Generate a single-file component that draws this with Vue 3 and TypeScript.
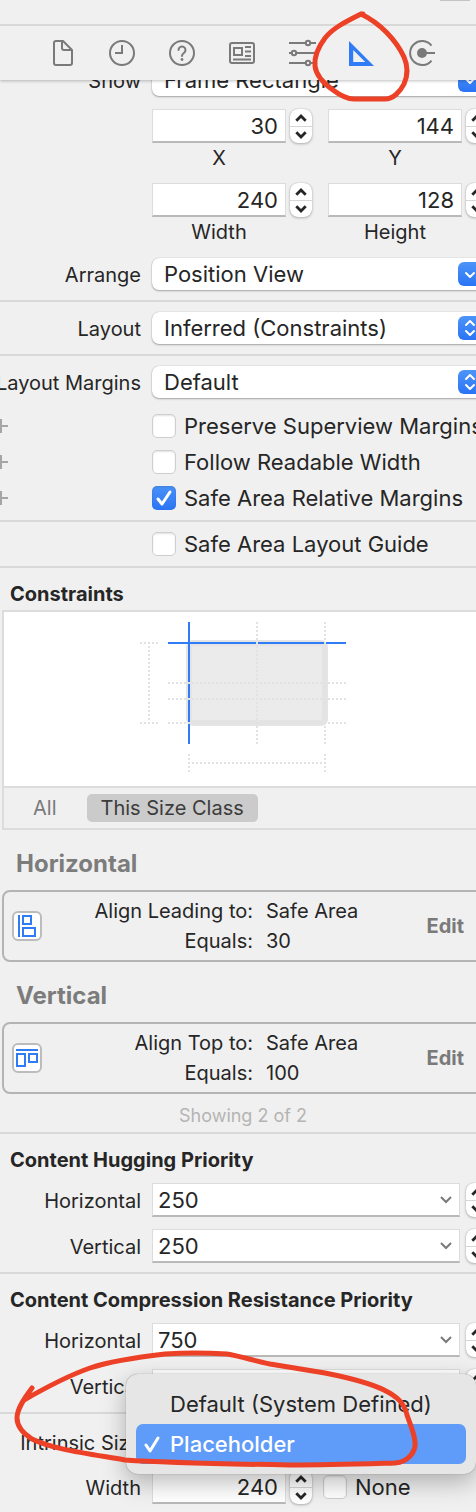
<script setup lang="ts">
import { ref } from 'vue'

interface Constraint {
  axis: string
  kind: 'leading' | 'top'
  relation: string
  target: string
  value: string
}

interface PriorityGroup {
  title: string
  rows: { id: string; label: string; value: string }[]
}

const tabs = ['file', 'history', 'help', 'identity', 'attributes', 'size', 'connections']
const activeTab = ref('size')

const frameFields = ref([
  { id: 'x', label: 'X', value: '30' },
  { id: 'y', label: 'Y', value: '144' },
  { id: 'width', label: 'Width', value: '240' },
  { id: 'height', label: 'Height', value: '128' },
])

const marginOptions = ref([
  { id: 'superview', label: 'Preserve Superview Margins', checked: false },
  { id: 'readable', label: 'Follow Readable Width', checked: false },
  { id: 'safe-relative', label: 'Safe Area Relative Margins', checked: true },
])
const safeAreaGuide = ref(false)
const noWidth = ref(false)
const intrinsicWidth = ref('240')

const constraints: Constraint[] = [
  { axis: 'Horizontal', kind: 'leading', relation: 'Align Leading to:', target: 'Safe Area', value: '30' },
  { axis: 'Vertical', kind: 'top', relation: 'Align Top to:', target: 'Safe Area', value: '100' },
]

const priorities = ref<PriorityGroup[]>([
  {
    title: 'Content Hugging Priority',
    rows: [
      { id: 'hug-h', label: 'Horizontal', value: '250' },
      { id: 'hug-v', label: 'Vertical', value: '250' },
    ],
  },
  {
    title: 'Content Compression Resistance Priority',
    rows: [
      { id: 'res-h', label: 'Horizontal', value: '750' },
      { id: 'res-v', label: 'Vertical', value: '750' },
    ],
  },
])
</script>

<template>
  <div class="inspector">
    <header class="header">
      <div class="titlebar"><span class="handle"></span></div>
      <nav class="tabs" aria-label="Inspectors">
        <button
          v-for="tab in tabs"
          :key="tab"
          type="button"
          class="tab"
          :class="{ active: tab === activeTab }"
          :aria-label="tab"
          @click="activeTab = tab"
        >
          <svg viewBox="0 0 28 28" width="28" height="28" fill="none" stroke="currentColor" stroke-width="2">
            <template v-if="tab === 'file'">
              <path d="M8 2h7l9 9v13a2 2 0 0 1-2 2H8a2 2 0 0 1-2-2V4a2 2 0 0 1 2-2z" stroke-linejoin="round" />
              <path d="M14 2v7a2 2 0 0 0 2 2h8" />
            </template>
            <template v-else-if="tab === 'history'">
              <circle cx="14" cy="14" r="12" />
              <path d="M14 6v8H7" />
            </template>
            <template v-else-if="tab === 'help'">
              <circle cx="14" cy="14" r="12" />
              <path d="M10.5 11a3.5 3.5 0 1 1 5.6 2.8c-1.3 1-2.1 1.5-2.1 3.2" stroke-linecap="round" />
              <circle cx="14" cy="20.5" r="1.4" fill="currentColor" stroke="none" />
            </template>
            <template v-else-if="tab === 'identity'">
              <rect x="2" y="4" width="24" height="20" rx="2" />
              <rect x="6" y="9" width="8" height="7" />
              <path d="M17 8h6M17 12.5h6M17 17h6M5 20.5h18" />
            </template>
            <template v-else-if="tab === 'attributes'">
              <path d="M1 4h17M22 4h6M1 14h3M8 14h20M1 24h17M22 24h6" />
              <circle cx="20" cy="4" r="2.2" />
              <circle cx="6" cy="14" r="2.2" />
              <circle cx="20" cy="24" r="2.2" />
            </template>
            <template v-else-if="tab === 'size'">
              <path fill="currentColor" stroke="none" fill-rule="evenodd" d="M1 2v25h25zM5.2 11L17.2 23h-12z" />
            </template>
            <template v-else>
              <path d="M23.5 6.5a12 12 0 1 0 0 15M14 14h13" />
              <circle cx="14" cy="14" r="5" fill="currentColor" stroke="none" />
            </template>
          </svg>
        </button>
      </nav>
    </header>

    <main class="viewport">
      <div class="content">
        <section class="group frame-group">
          <div class="row">
            <label class="label" for="show">Show</label>
            <div class="popup">
              <select id="show"><option>Frame Rectangle</option></select>
              <span class="arrows">
                <svg viewBox="0 0 24 24" width="24" height="24"><path d="M8 11l4 4 4-4" /></svg>
              </span>
            </div>
          </div>
          <div class="frame-grid">
            <div v-for="field in frameFields" :key="field.id" class="frame-cell">
              <div class="number">
                <input :id="field.id" v-model="field.value" class="field right" type="text" />
                <div class="stepper">
                  <button type="button" aria-label="Increase"><svg viewBox="0 0 22 17"><path d="M6 11.5L11 6.5l5 5" /></svg></button>
                  <button type="button" aria-label="Decrease"><svg viewBox="0 0 22 17"><path d="M6 5.5l5 5 5-5" /></svg></button>
                </div>
              </div>
              <label :for="field.id">{{ field.label }}</label>
            </div>
          </div>
          <div class="row">
            <label class="label" for="arrange">Arrange</label>
            <div class="popup">
              <select id="arrange"><option>Position View</option></select>
              <span class="arrows">
                <svg viewBox="0 0 24 24" width="24" height="24"><path d="M8 11l4 4 4-4" /></svg>
              </span>
            </div>
          </div>
        </section>

        <section class="group">
          <div class="row">
            <label class="label" for="layout">Layout</label>
            <div class="popup">
              <select id="layout"><option>Inferred (Constraints)</option></select>
              <span class="arrows">
                <svg viewBox="0 0 24 24" width="24" height="24"><path d="M8 9l4-4 4 4M8 15l4 4 4-4" /></svg>
              </span>
            </div>
          </div>
        </section>

        <section class="group">
          <div class="row">
            <label class="label" for="margins">Layout Margins</label>
            <div class="popup">
              <select id="margins"><option>Default</option></select>
              <span class="arrows">
                <svg viewBox="0 0 24 24" width="24" height="24"><path d="M8 9l4-4 4 4M8 15l4 4 4-4" /></svg>
              </span>
            </div>
          </div>
          <div class="checks">
            <div v-for="option in marginOptions" :key="option.id" class="row">
              <button type="button" class="add" aria-label="Add variation">
                <svg viewBox="0 0 8 14" width="8" height="14"><path d="M1 0v14M0 7h8" /></svg>
              </button>
              <label class="check">
                <input v-model="option.checked" type="checkbox" />
                <span class="box"><svg v-if="option.checked" viewBox="0 0 24 24"><path d="M6 13l4 5 8-12" /></svg></span>
                {{ option.label }}
              </label>
            </div>
          </div>
        </section>

        <section class="group">
          <div class="row">
            <span></span>
            <label class="check">
              <input v-model="safeAreaGuide" type="checkbox" />
              <span class="box"><svg v-if="safeAreaGuide" viewBox="0 0 24 24"><path d="M6 13l4 5 8-12" /></svg></span>
              Safe Area Layout Guide
            </label>
          </div>
        </section>

        <section class="constraints">
          <h2 class="heading">Constraints</h2>
          <div class="diagram-box">
            <div class="diagram">
              <svg viewBox="0 0 206 174" width="206" height="174" fill="none" stroke-width="2">
                <rect x="46" y="28" width="142" height="86" rx="7" fill="#e4e4e4" />
                <rect x="52" y="34" width="130" height="74" rx="2" fill="#ebebeb" />
                <path class="pin" d="M49 10v122M28 31h178" />
                <g class="dots">
                  <path d="M117 10v122M185 10v122" />
                  <path d="M28 71h178M28 87h178M28 111h178" />
                  <path d="M0 31h18M0 111h18M9 34v76" />
                  <path d="M49 142v18M185 142v18M52 151h132" />
                </g>
              </svg>
            </div>
            <div class="scope">
              <button type="button">All</button>
              <button type="button" class="selected">This Size Class</button>
            </div>
          </div>

          <template v-for="item in constraints" :key="item.axis">
            <h3 class="axis">{{ item.axis }}</h3>
            <div class="card">
              <span class="card-icon">
                <svg viewBox="0 0 26 26" width="26" height="26" fill="none" stroke="currentColor" stroke-width="2">
                  <path v-if="item.kind === 'leading'" d="M5 2v22M9 3h8v8H9zM9 15h12v8H9z" />
                  <path v-else d="M2 5h22M3 9h8v12H3zM15 9h8v8h-8z" />
                </svg>
              </span>
              <dl>
                <dt>{{ item.relation }}</dt>
                <dd>{{ item.target }}</dd>
                <dt>Equals:</dt>
                <dd>{{ item.value }}</dd>
              </dl>
              <button type="button" class="edit">Edit</button>
            </div>
          </template>
          <p class="count">Showing 2 of 2</p>
        </section>

        <section v-for="group in priorities" :key="group.title" class="priority">
          <h2 class="heading">{{ group.title }}</h2>
          <div class="priority-rows">
            <div v-for="row in group.rows" :key="row.id" class="row">
              <label class="label" :for="row.id">{{ row.label }}</label>
              <div class="number wide">
                <div class="combo">
                  <input :id="row.id" v-model="row.value" class="field" type="text" />
                  <button type="button" aria-label="Choose a priority">
                    <svg viewBox="0 0 12 12" width="12" height="12"><path d="M1 3l5 5 5-5" /></svg>
                  </button>
                </div>
                <div class="stepper">
                  <button type="button" aria-label="Increase"><svg viewBox="0 0 22 17"><path d="M6 11.5L11 6.5l5 5" /></svg></button>
                  <button type="button" aria-label="Decrease"><svg viewBox="0 0 22 17"><path d="M6 5.5l5 5 5-5" /></svg></button>
                </div>
              </div>
            </div>
          </div>
        </section>

        <section class="intrinsic">
          <div class="row">
            <label class="label" for="intrinsic">Intrinsic Size</label>
            <div class="popup">
              <select id="intrinsic"><option>Placeholder</option></select>
            </div>
          </div>
          <div class="row">
            <label class="label" for="intrinsic-width">Width</label>
            <div class="intrinsic-fields">
              <div class="number">
                <input id="intrinsic-width" v-model="intrinsicWidth" class="field right" type="text" />
                <div class="stepper">
                  <button type="button" aria-label="Increase"><svg viewBox="0 0 22 17"><path d="M6 11.5L11 6.5l5 5" /></svg></button>
                  <button type="button" aria-label="Decrease"><svg viewBox="0 0 22 17"><path d="M6 5.5l5 5 5-5" /></svg></button>
                </div>
              </div>
              <label class="check">
                <input v-model="noWidth" type="checkbox" />
                <span class="box"><svg v-if="noWidth" viewBox="0 0 24 24"><path d="M6 13l4 5 8-12" /></svg></span>
                None
              </label>
            </div>
          </div>

          <div class="menu" role="menu">
            <button type="button" role="menuitem">Default (System Defined)</button>
            <button type="button" role="menuitem" class="chosen">
              <svg viewBox="0 0 16 18" width="16" height="18"><path d="M2 10l4 6 8-13" /></svg>
              Placeholder
            </button>
          </div>

          <svg class="mark mark-menu" viewBox="0 1340 430 140" width="430" height="140">
            <path d="M32 1388C26 1396 17 1408 17 1418C17 1427 24 1434 32 1439C52 1449 84 1453 125 1460C170 1463 230 1464 290 1465C330 1465 360 1464 395 1463C408 1462 416 1452 415 1442C414 1432 410 1424 407 1415C404 1403 398 1397 384 1390C368 1382 345 1377 325 1373L270 1364C255 1361 240 1356 227 1354C210 1353 180 1353 165 1354C130 1358 105 1363 90 1368C70 1375 45 1388 24 1400" />
          </svg>
        </section>
      </div>
    </main>

    <svg class="mark mark-tab" viewBox="308 4 106 100" width="106" height="100">
      <path d="M363 14L361 14C345 22 333 28 325 38C319 46 314 56 315 66C316 75 323 83 333 90C341 96 347 99 354 99L385 99C393 99 400 92 404 84C408 75 408 66 404 57C396 40 380 23 361 14" />
    </svg>
  </div>
</template>

<style>
body {
  margin: 0;
  background: #f0f0f0;
}
</style>

<style scoped>
.inspector {
  position: relative;
  overflow: hidden;
  background: #f0f0f0;
  color: #262626;
  font-family: Inter, Roboto, "Liberation Sans", sans-serif;
  font-size: 20px;
  line-height: 28px;
}

.inspector *,
.inspector *::before {
  box-sizing: border-box;
}

button,
input,
select {
  margin: 0;
  padding: 0;
  border: 0;
  background: none;
  color: inherit;
  font: inherit;
}

h2,
h3,
p,
dl,
dd {
  margin: 0;
}

.header {
  position: relative;
  z-index: 1;
  background: #f0f0f0;
  box-shadow: 0 1px 3px rgba(0, 0, 0, 0.25);
}

.titlebar {
  display: flex;
  justify-content: flex-end;
  height: 26px;
  padding-right: 6px;
  border-bottom: 2px solid #d8d8d8;
}

.handle {
  width: 30px;
  height: 1px;
  background: #c4c4c4;
}

.tabs {
  display: flex;
  justify-content: center;
  height: 54px;
  padding-left: 8px;
}

.tab {
  display: flex;
  align-items: center;
  justify-content: center;
  width: 60px;
  color: #7a7a7a;
}

.tab.active {
  color: #2f7cf6;
}

.viewport {
  overflow: hidden;
}

/* The pane is scrolled slightly and runs past the right edge. */
.content {
  width: calc(100% + 12px);
  margin-top: -16px;
}

.group {
  padding: 10px 0;
  border-bottom: 2px solid #d9d9d9;
}

.frame-group {
  padding-top: 0;
}

.row {
  display: grid;
  grid-template-columns: 141px minmax(0, 1fr);
  column-gap: 11px;
  align-items: center;
}

.label {
  display: flex;
  justify-content: flex-end;
  padding-top: 2px;
  white-space: nowrap;
}

.popup {
  position: relative;
  height: 32px;
}

.popup select {
  width: 100%;
  height: 100%;
  padding: 0 36px 0 12px;
  border-radius: 7px;
  background: #fff;
  box-shadow: 0 0 1px rgba(0, 0, 0, 0.3), 0 1px 2px rgba(0, 0, 0, 0.3);
  font-size: 22px;
  appearance: none;
}

.arrows {
  position: absolute;
  top: 4px;
  right: 6px;
  width: 24px;
  height: 24px;
  border-radius: 6px;
  background: linear-gradient(#4d94f8, #2a74f5);
  pointer-events: none;
}

.arrows svg {
  display: block;
}

.arrows path,
.box path,
.menu path {
  fill: none;
  stroke: #fff;
  stroke-width: 3;
  stroke-linecap: round;
  stroke-linejoin: round;
}

.arrows path {
  stroke-width: 2;
}

.frame-grid {
  display: grid;
  grid-template-columns: 1fr 1fr;
  gap: 10px 16px;
  padding: 13px 0 11px 152px;
}

.frame-cell label {
  display: block;
  width: calc(100% - 26px);
  line-height: 30px;
  text-align: center;
}

.number {
  display: grid;
  grid-template-columns: minmax(0, 1fr) 22px;
  column-gap: 4px;
  align-items: center;
  height: 34px;
}

.number.wide {
  column-gap: 6px;
}

.field {
  width: 100%;
  height: 34px;
  padding: 0 7px 0 5px;
  border: 1px solid #dcdcdc;
  border-bottom: 2px solid #b9b9b9;
  background: #fff;
  font-size: 22px;
}

.field.right {
  text-align: right;
}

.stepper {
  display: grid;
  grid-template-rows: 1fr 1fr;
  height: 34px;
  border-radius: 8px;
  background: #fff;
  box-shadow: 0 0 1px rgba(0, 0, 0, 0.3), 0 1px 3px rgba(0, 0, 0, 0.25);
}

.stepper button + button {
  border-top: 1px solid #d6d6d6;
}

.stepper svg {
  display: block;
  width: 22px;
  height: 16px;
}

.stepper path {
  fill: none;
  stroke: #262626;
  stroke-width: 3;
}

.checks {
  display: grid;
  gap: 12px;
  padding: 16px 0 0;
}

.add {
  display: flex;
}

.add path {
  fill: none;
  stroke: #a6a6a6;
  stroke-width: 2;
}

.check {
  display: flex;
  gap: 8px;
  align-items: center;
  height: 24px;
  font-size: 22px;
  white-space: nowrap;
}

.check input {
  position: absolute;
  opacity: 0;
}

.box {
  flex: none;
  width: 24px;
  height: 24px;
  border: 1px solid #cfcfcf;
  border-radius: 5px;
  background: #fff;
  box-shadow: inset 0 1px 2px rgba(0, 0, 0, 0.12);
}

.box svg {
  display: block;
}

.check input:checked + .box {
  border: 0;
  background: linear-gradient(#4a91f8, #2a74f5);
}

.heading {
  padding-left: 10px;
  font-size: 20px;
  font-weight: 700;
  line-height: 28px;
}

.constraints {
  padding: 12px 4px 0 2px;
  border-bottom: 2px solid #d9d9d9;
}

.constraints .heading {
  padding-left: 8px;
}

.diagram-box {
  margin-top: 2px;
  border: 2px solid #dcdcdc;
}

.diagram {
  display: flex;
  justify-content: center;
  border-bottom: 2px solid #dcdcdc;
  background: #fff;
}

.pin {
  stroke: #2f7cf6;
}

.dots {
  stroke: #e2e2e2;
  stroke-dasharray: 2 2;
}

.scope {
  display: flex;
  gap: 16px;
  align-items: center;
  height: 40px;
  padding-left: 15px;
}

.scope button {
  padding: 0 14px;
  border-radius: 5px;
  color: #7a7a7a;
}

.scope .selected {
  background: #cbcbcb;
  color: #3c3c3c;
}

.axis {
  padding: 18px 14px 10px;
  color: #7c7c7c;
  font-size: 24px;
  font-weight: 700;
  line-height: 32px;
}

.card {
  display: flex;
  align-items: center;
  padding: 4px 18px 4px 8px;
  border: 2px solid #b4b4b4;
  border-radius: 8px;
}

.card-icon {
  flex: none;
  width: 30px;
  height: 30px;
  border: 2px solid #bcbcbc;
  border-radius: 6px;
  background: #fff;
  color: #2f7cf6;
}

.card-icon svg {
  display: block;
}

.card dl {
  display: grid;
  flex: 1;
  grid-template-columns: 211px 1fr;
  column-gap: 13px;
  line-height: 30px;
}

.card dt {
  text-align: right;
}

.edit {
  color: #7a7a7a;
  font-weight: 700;
}

.count {
  padding: 8px 0 2px;
  color: #b4b4b4;
  font-size: 18px;
  text-align: center;
}

.priority {
  padding: 12px 0 9px;
  border-bottom: 2px solid #d9d9d9;
}

.priority-rows {
  display: grid;
  gap: 12px;
  padding-top: 9px;
}

.combo {
  position: relative;
}

.combo .field {
  display: block;
}

.combo button {
  position: absolute;
  top: 11px;
  right: 8px;
  display: flex;
}

.combo path {
  fill: none;
  stroke: #7a7a7a;
  stroke-width: 2;
}

.intrinsic {
  position: relative;
  display: grid;
  gap: 12px;
  padding: 12px 0 8px;
}

.intrinsic-fields {
  display: grid;
  grid-template-columns: 160px 1fr;
  column-gap: 11px;
  align-items: center;
}

.menu {
  position: absolute;
  top: -40px;
  right: 12px;
  left: 126px;
  padding: 10px;
  border-radius: 12px;
  background: #e6e6e6;
  box-shadow: 0 0 1px rgba(0, 0, 0, 0.5), 0 8px 24px rgba(0, 0, 0, 0.28);
}

.menu button {
  display: flex;
  gap: 10px;
  align-items: center;
  width: 100%;
  height: 40px;
  padding-left: 34px;
  border-radius: 7px;
  font-size: 22px;
}

.menu .chosen {
  padding-left: 8px;
  background: #5f9bf8;
  color: #fff;
  font-weight: 500;
}

.mark {
  position: absolute;
  z-index: 2;
  pointer-events: none;
}

.mark path {
  fill: none;
  stroke: #ec4127;
  stroke-width: 5;
  stroke-linecap: round;
  stroke-linejoin: round;
}

.mark-menu {
  top: -74px;
  left: 0;
}

.mark-tab {
  top: 4px;
  left: 308px;
}
</style>
